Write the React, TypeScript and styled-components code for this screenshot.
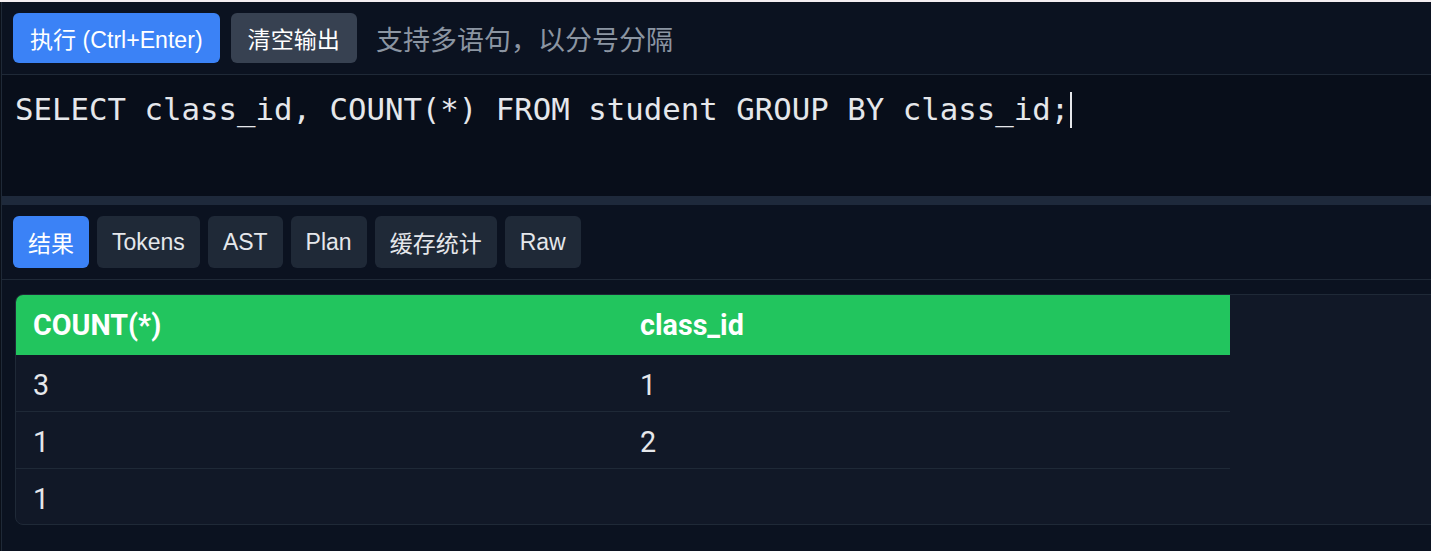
import React from "react";
import styled, { createGlobalStyle } from "styled-components";

const GlobalStyle = createGlobalStyle`
  html, body {
    margin: 0;
    padding: 0;
    background: #0a0f18;
    overflow: hidden;
  }
  #root {
    min-height: 100vh;
  }
`;

const TopStrip = styled.div`
  height: 2px;
  background: #f4eef1;
`;

const Shell = styled.div`
  margin-left: 1px;
  border-left: 1px solid #1f2937;
  background: #0b1220;
  min-height: calc(100vh - 2px);
  font-family: "Liberation Sans", "Noto Sans CJK SC", sans-serif;
`;

const Toolbar = styled.div`
  display: flex;
  align-items: center;
  gap: 11px;
  padding: 11px 11px;
  border-bottom: 1px solid #1f2937;
  background: #0b1220;
`;

const Button = styled.button<{ $primary?: boolean }>`
  height: 50px;
  padding: 0 17px;
  border: none;
  border-radius: 6px;
  background: ${(p) => (p.$primary ? "#3b82f6" : "#374151")};
  color: #ffffff;
  font-family: "Liberation Sans", "Noto Sans CJK SC", sans-serif;
  font-size: 23.1px;
  cursor: pointer;
`;

const Hint = styled.span`
  margin-left: 8px;
  color: #8b95a2;
  font-size: 27px;
  font-family: "Noto Sans CJK SC", sans-serif;
`;

const Editor = styled.div`
  height: 121px;
  box-sizing: border-box;
  padding: 11px 13px;
  background: #080e1a;
  color: #e5e7eb;
  font-family: "DejaVu Sans Mono", monospace;
  font-size: 30.72px;
  line-height: 1.5;
  white-space: pre;
`;

const Caret = styled.span`
  display: inline-block;
  width: 2px;
  height: 36px;
  margin-left: 1px;
  background: #e5e7eb;
  vertical-align: -8px;
`;

const Splitter = styled.div`
  height: 9px;
  background: #1e293b;
`;

const TabBar = styled.div`
  display: flex;
  gap: 8px;
  padding: 11px 11px;
  border-bottom: 1px solid #1f2937;
`;

const Tab = styled.button<{ $active?: boolean }>`
  height: 52px;
  padding: 0 15px;
  border: none;
  border-radius: 6px;
  background: ${(p) => (p.$active ? "#3b82f6" : "#1f2937")};
  color: ${(p) => (p.$active ? "#ffffff" : "#e5e7eb")};
  font-family: "Liberation Sans", "Noto Sans CJK SC", sans-serif;
  font-size: 23px;
  cursor: pointer;
`;

const Results = styled.div`
  padding: 14px 0 0 13px;
`;

const Card = styled.div`
  width: 1500px;
  border: 1px solid #1f2937;
  border-radius: 8px;
  background: #111827;
  overflow: hidden;
`;

const Table = styled.table`
  width: 1214px;
  border-collapse: separate;
  border-spacing: 0;
  table-layout: fixed;
  font-family: "Roboto", sans-serif;
  font-size: 28.7px;
`;

const Th = styled.th`
  height: 60px;
  padding: 0 17px;
  background: #22c55e;
  color: #ffffff;
  font-weight: 700;
  text-align: left;
`;

const Td = styled.td<{ $last?: boolean }>`
  height: ${(p) => (p.$last ? "51px" : "52px")};
  padding: 4px 17px 0;
  color: #e5e7eb;
  vertical-align: middle;
  border-bottom: ${(p) => (p.$last ? "none" : "1px solid #1f2937")};
`;

const tabs = ["结果", "Tokens", "AST", "Plan", "缓存统计", "Raw"];

const rows: [string, string][] = [
  ["3", "1"],
  ["1", "2"],
  ["1", ""],
];

export default function App() {
  return (
    <>
      <GlobalStyle />
      <TopStrip />
      <Shell>
        <Toolbar>
          <Button $primary>执行 (Ctrl+Enter)</Button>
          <Button>清空输出</Button>
          <Hint>支持多语句，以分号分隔</Hint>
        </Toolbar>
        <Editor>
          SELECT class_id, COUNT(*) FROM student GROUP BY class_id;
          <Caret />
        </Editor>
        <Splitter />
        <TabBar>
          {tabs.map((t, i) => (
            <Tab key={t} $active={i === 0}>
              {t}
            </Tab>
          ))}
        </TabBar>
        <Results>
          <Card>
            <Table>
              <thead>
                <tr>
                  <Th>COUNT(*)</Th>
                  <Th>class_id</Th>
                </tr>
              </thead>
              <tbody>
                {rows.map((r, i) => (
                  <tr key={i}>
                    <Td $last={i === rows.length - 1}>{r[0]}</Td>
                    <Td $last={i === rows.length - 1}>{r[1]}</Td>
                  </tr>
                ))}
              </tbody>
            </Table>
          </Card>
        </Results>
      </Shell>
    </>
  );
}
